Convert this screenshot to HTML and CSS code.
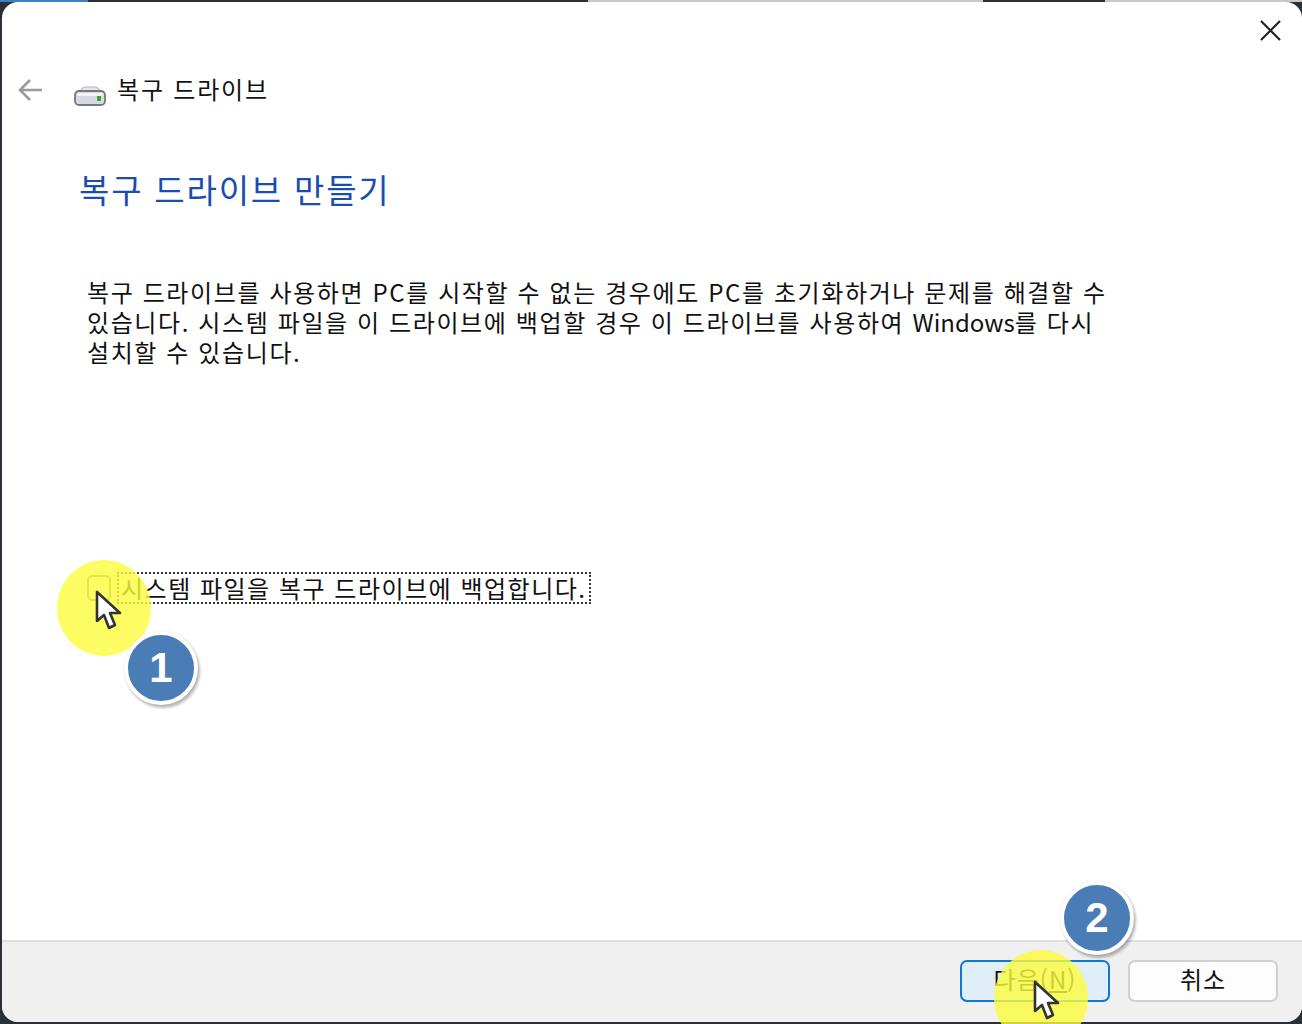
FILE: index.html
```html
<!DOCTYPE html>
<html lang="ko">
<head>
    <meta charset="UTF-8">
    <meta name="viewport" content="width=device-width, initial-scale=1.0">
    <title>복구 드라이브</title>
    <link rel="stylesheet" href="styles.css">
</head>
<body>
    <div class="strip">
        <span class="strip-blue"></span>
        <span class="strip-light"></span>
        <span class="strip-dark"></span>
        <span class="strip-light2"></span>
        <span class="strip-dark2"></span>
    </div>
    <div class="window">
        <div class="content">
            <div class="close-row">
                <svg class="close" width="24" height="24" viewBox="0 0 24 24">
                    <path d="M3 3 L22 22 M22 3 L3 22" stroke="#222" stroke-width="2.2" fill="none"/>
                </svg>
            </div>
            <div class="nav">
                <svg class="back" width="24" height="24" viewBox="0 0 24 24">
                    <path d="M24 12 H2 M12 2 L2 12 L12 22" stroke="#9a9a9a" stroke-width="2.6" fill="none"/>
                </svg>
                <svg class="drive" width="32" height="20" viewBox="0 0 32 20">
                    <path d="M6 6 Q7 1 12 1 H21 Q25 1 27 6 Z" fill="#e6e6e6" stroke="#b5b5b5"/>
                    <rect x="1" y="5" width="30" height="14" rx="4" fill="#d6d8e2" stroke="#75787f" stroke-width="1.8"/>
                    <rect x="3" y="7" width="26" height="3" rx="1.5" fill="#f4f4f6"/>
                    <rect x="23" y="10" width="4" height="5" fill="#3fa52a"/>
                </svg>
                <span class="nav-title">복구 드라이브</span>
            </div>
            <h1 class="heading">복구 드라이브 만들기</h1>
            <p class="desc">복구 드라이브를 사용하면 PC를 시작할 수 없는 경우에도 PC를 초기화하거나 문제를 해결할 수<br>있습니다. 시스템 파일을 이 드라이브에 백업할 경우 이 드라이브를 사용하여 <span class="latin">Windows</span>를 다시<br>설치할 수 있습니다.</p>
            <label class="check-row">
                <span class="checkbox"></span>
                <span class="check-label">시스템 파일을 복구 드라이브에 백업합니다.</span>
            </label>
        </div>
        <div class="footer">
            <div class="btn btn-primary">다음(<u>N</u>)</div>
            <div class="btn">취소</div>
        </div>
    </div>

    <!-- annotations on top of the shot -->
    <div class="spot spot-1"></div>
    <div class="spot spot-2"></div>
    <div class="badge badge-1">1</div>
    <div class="badge badge-2">2</div>
    <svg class="cursor cursor-1" width="28" height="42" viewBox="0 0 28 42">
        <path d="M2 2 V31 L9 25 L14 38 L20 35 L15 23 L25 23 Z" fill="#fff" stroke="#333" stroke-width="2.6" stroke-linejoin="round"/>
    </svg>
    <svg class="cursor cursor-2" width="28" height="42" viewBox="0 0 28 42">
        <path d="M2 2 V31 L9 25 L14 38 L20 35 L15 23 L25 23 Z" fill="#fff" stroke="#333" stroke-width="2.6" stroke-linejoin="round"/>
    </svg>
</body>
</html>
```

FILE: styles.css
```css
html, body {
    height: 100%;
}
body {
    margin: 0;
    background-color: #2b2f36;
    font-family: "Noto Sans CJK KR", "Liberation Sans", sans-serif;
    color: #111;
    overflow: hidden;
    position: relative;
}
.strip {
    display: flex;
    height: 2px;
    position: absolute;
    top: 0;
    left: 0;
    right: 0;
}
.strip-blue { width: 88px; background-color: #3f7fc4; }
.strip-light { width: 500px; background-color: #2b2f36; }
.strip-dark { width: 395px; background-color: #c9c9c9; }
.strip-light2 { width: 122px; background-color: #2b2f36; }
.strip-dark2 { flex: 1; background-color: #c9c9c9; }
.window {
    position: absolute;
    top: 2px;
    left: 2px;
    right: 0;
    bottom: 2px;
    background-color: #fff;
    border-radius: 16px;
    display: flex;
    flex-direction: column;
    overflow: hidden;
}
.content {
    flex: 1;
    padding: 0 0 0 16px;
}
.close-row {
    display: flex;
    justify-content: flex-end;
    padding: 16px 20px 0 0;
    height: 44px;
    box-sizing: border-box;
}
.nav {
    display: flex;
    align-items: center;
    height: 48px;
    margin-top: 20px;
}
.back {
    margin-right: 32px;
}
.drive {
    margin: 12px 11px 0 0;
}
.nav-title {
    font-size: 24px;
    letter-spacing: 1.8px;
    position: relative;
    top: -2px;
}
.heading {
    margin: 51px 0 0 61px;
    font-size: 33px;
    line-height: 48px;
    font-weight: 400;
    letter-spacing: 1.8px;
    color: #1a4db0;
}
.desc {
    margin: 64px 0 0 69px;
    font-size: 24px;
    line-height: 30px;
    letter-spacing: 1.6px;
}
.latin {
    letter-spacing: 0;
}
.check-row {
    display: flex;
    align-items: center;
    margin: 205px 0 0 69px;
}
.checkbox {
    width: 24px;
    height: 26px;
    border: 2px solid #8b8b8b;
    border-radius: 5px;
    margin-right: 6px;
    box-sizing: border-box;
}
.check-label {
    font-size: 24px;
    line-height: 28px;
    letter-spacing: 1.5px;
    border: 2px dotted #333;
    padding: 0 2px;
}
.footer {
    height: 82px;
    box-sizing: border-box;
    background-color: #f0f0f0;
    border-top: 2px solid #dfdfdf;
    display: flex;
    justify-content: flex-end;
    align-items: flex-start;
    gap: 18px;
    padding: 18px 24px 0 0;
}
.btn {
    width: 150px;
    height: 42px;
    box-sizing: border-box;
    background-color: #fdfdfd;
    border: 2px solid #d0d0d0;
    border-radius: 7px;
    font-size: 24px;
    line-height: 34px;
    letter-spacing: 1px;
    text-align: center;
}
.btn-primary {
    background-color: #e0eef9;
    border-color: #0f78d4;
}
.spot {
    position: absolute;
    width: 94px;
    height: 96px;
    border-radius: 50%;
    background-color: rgba(252, 252, 60, 0.8);
}
.spot-1 { left: 57px; top: 560px; }
.spot-2 { left: 994px; top: 950px; }
.badge {
    position: absolute;
    width: 66px;
    height: 66px;
    box-sizing: content-box;
    border: 4px solid #fff;
    border-radius: 50%;
    background-color: #4a7db6;
    color: #fff;
    font-family: "Liberation Sans", sans-serif;
    font-size: 42px;
    font-weight: 700;
    line-height: 66px;
    text-align: center;
    box-shadow: 2px 3px 3px rgba(0, 0, 0, 0.28), 0 0 2px rgba(0, 0, 0, 0.12);
}
.badge-1 { left: 124px; top: 631px; }
.badge-2 { left: 1060px; top: 881px; }
.cursor {
    position: absolute;
}
.cursor-1 { left: 95px; top: 590px; }
.cursor-2 { left: 1033px; top: 980px; }
```
